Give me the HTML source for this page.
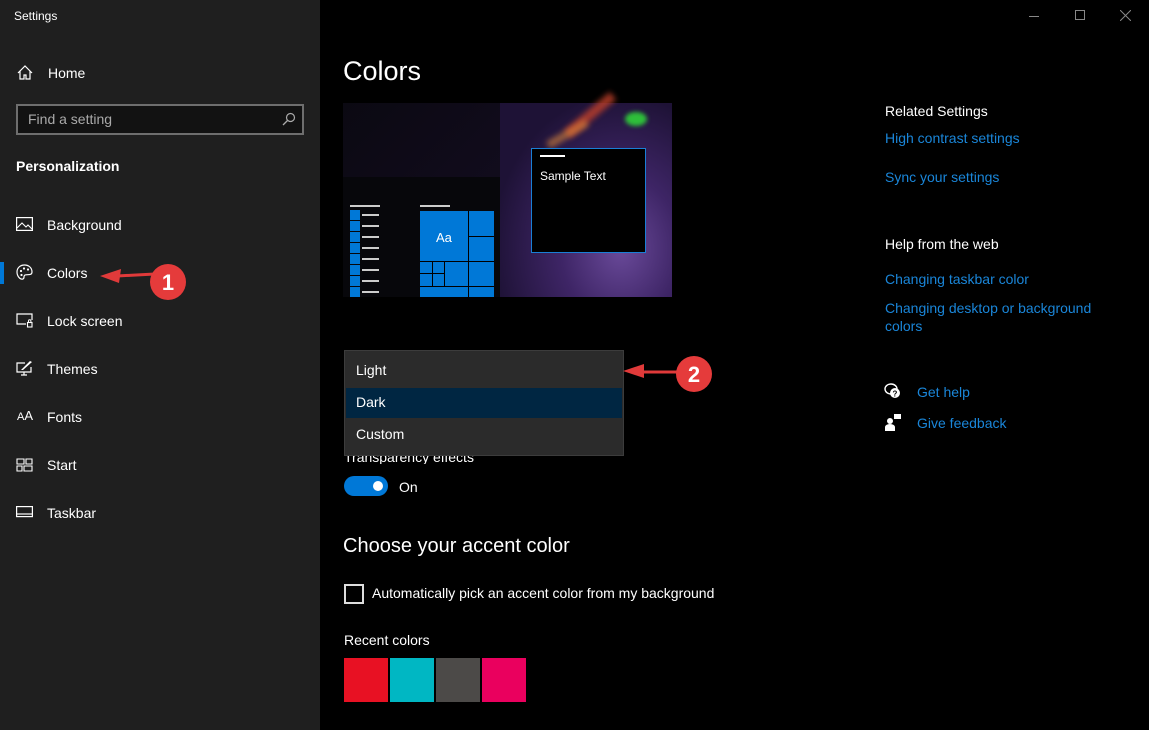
<!DOCTYPE html>
<html><head><meta charset="utf-8"><style>
*{margin:0;padding:0;box-sizing:border-box}
body{width:1149px;height:730px;background:#000;font-family:"Liberation Sans",sans-serif;color:#fff;position:relative;overflow:hidden}
.a{position:absolute}
.side{left:0;top:0;width:320px;height:730px;background:#1f1f1f}
.t{font-size:14px;white-space:nowrap}
.lnk{color:#1a86d9;font-size:14px;white-space:nowrap}
.ic{position:absolute;left:16px}
</style></head><body>
<div class="a side"></div>
<div class="a t" style="left:14px;top:9px;font-size:12px">Settings</div>
<svg class="a" style="left:17px;top:65px" width="16" height="15" viewBox="0 0 16 15"><path d="M1 8 L8 1 L15 8 M3 6 V14 H7 V10 H9 V14 H13 V6" fill="none" stroke="#fff" stroke-width="1.2"/></svg>
<div class="a t" style="left:48px;top:65px">Home</div>
<div class="a" style="left:16px;top:104px;width:288px;height:31px;border:2px solid #6e6e6e;background:#121212"></div>
<div class="a t" style="left:28px;top:111px;color:#aaa">Find a setting</div>
<svg class="a" style="left:282px;top:112px" width="14" height="14" viewBox="0 0 14 14"><circle cx="8.5" cy="5.5" r="4" fill="none" stroke="#aaa" stroke-width="1.2"/><path d="M5.5 8.5 L1 13" stroke="#aaa" stroke-width="1.3"/></svg>
<div class="a t" style="left:16px;top:158px;font-weight:bold">Personalization</div>

<svg class="ic" style="top:217px" width="17" height="14" viewBox="0 0 17 14"><rect x="0.6" y="0.6" width="15.8" height="12.8" fill="none" stroke="#fff" stroke-width="1.2"/><path d="M1 11 L6 6 L10 10 L12 8 L16 12" fill="none" stroke="#fff" stroke-width="1.1"/></svg>
<div class="a t" style="left:47px;top:217px">Background</div>
<div class="a" style="left:0;top:262px;width:4px;height:22px;background:#0078d7"></div>
<svg class="ic" style="top:264px" width="17" height="17" viewBox="0 0 17 17"><path d="M8.5 1 C4 1 1 4 1 8 C1 12 4 16 7 15 C9 14 7 12 9 11 C11 10 16 12 16 8 C16 4 13 1 8.5 1 Z" fill="none" stroke="#fff" stroke-width="1.2"/><circle cx="5" cy="7" r="1.1" fill="#fff"/><circle cx="8" cy="4.5" r="1.1" fill="#fff"/><circle cx="12" cy="5.5" r="1.1" fill="#fff"/><circle cx="5.5" cy="11" r="1.1" fill="#fff"/></svg>
<div class="a t" style="left:47px;top:265px">Colors</div>
<svg class="ic" style="top:313px" width="17" height="15" viewBox="0 0 17 15"><path d="M10 11 H1 V1 H16 V7" fill="none" stroke="#fff" stroke-width="1.2"/><rect x="11.5" y="9.5" width="4.5" height="4.5" fill="none" stroke="#fff" stroke-width="1.1"/><path d="M12.5 9.5 V8 a1.2 1.2 0 0 1 2.4 0 V9.5" fill="none" stroke="#fff"/></svg>
<div class="a t" style="left:47px;top:313px">Lock screen</div>
<svg class="ic" style="top:360px" width="17" height="17" viewBox="0 0 17 17"><path d="M9 3 H1 V12 H15 V7 M5 15 H11 M8 12 V15" fill="none" stroke="#fff" stroke-width="1.2"/><path d="M5 10 L14 1 L16 2 L7 10 Z" fill="#fff"/></svg>
<div class="a t" style="left:47px;top:361px">Themes</div>
<div class="a" style="left:17px;top:408px;font-size:11px">A<span style="font-size:13px">A</span></div>
<div class="a t" style="left:47px;top:409px">Fonts</div>
<svg class="ic" style="top:458px" width="17" height="14" viewBox="0 0 17 14"><path d="M1 1 H8 V6 H1 Z M10 1 H16 V6 H10 Z M1 8 H6 V13 H1 Z M8 8 H16 V13 H8 Z" fill="none" stroke="#fff" stroke-width="1.1"/></svg>
<div class="a t" style="left:47px;top:457px">Start</div>
<svg class="ic" style="top:506px" width="17" height="12" viewBox="0 0 17 12"><rect x="0.6" y="0.6" width="15.8" height="10" fill="none" stroke="#fff" stroke-width="1.2"/><path d="M1 8 H16" stroke="#fff" stroke-width="1.2"/></svg>
<div class="a t" style="left:47px;top:505px">Taskbar</div>

<svg class="a" style="left:95px;top:258px" width="100" height="44" viewBox="0 0 100 44"><path d="M60 16 L22 18" stroke="#e03a3a" stroke-width="3"/><path d="M5 18 L26 11 L24 25 Z" fill="#e03a3a"/><circle cx="73" cy="24" r="18" fill="#e53b3b"/><text x="73" y="32" font-family="Liberation Sans" font-weight="bold" font-size="22" fill="#fff" text-anchor="middle">1</text></svg>

<div class="a" style="left:1029px;top:16px;width:10px;height:1px;background:#888"></div>
<div class="a" style="left:1075px;top:10px;width:10px;height:10px;border:1px solid #888"></div>
<svg class="a" style="left:1120px;top:10px" width="11" height="11"><path d="M0 0 L11 11 M11 0 L0 11" stroke="#888"/></svg>

<div class="a" style="left:343px;top:56px;font-size:27px">Colors</div>

<div class="a" style="left:343px;top:103px;width:329px;height:194px;background:linear-gradient(135deg,#0b0912,#120c1e 50%,#1e1236)"></div>
<div class="a" style="left:500px;top:103px;width:172px;height:194px;background:radial-gradient(ellipse at 70% 75%,#6a4a9a 0%,#3e2566 35%,#1e1236 75%),#1e1236"></div>
<div class="a" style="left:560px;top:110px;width:60px;height:10px;background:#c0402a;transform:rotate(-40deg);filter:blur(3px);opacity:.8"></div>
<div class="a" style="left:545px;top:130px;width:45px;height:8px;background:#e08a3a;transform:rotate(-30deg);filter:blur(3px);opacity:.6"></div>
<div class="a" style="left:625px;top:112px;width:22px;height:14px;border-radius:50%;background:#2ebf3a;filter:blur(2px)"></div>
<div class="a" style="left:343px;top:177px;width:157px;height:120px;background:#07070b"></div>
<div class="a" style="left:350px;top:205px;width:30px;height:2px;background:#ccc"></div>
<div class="a" style="left:420px;top:205px;width:30px;height:2px;background:#ccc"></div>
<div class="a" style="left:350px;top:210px;width:10px;height:87px;background:repeating-linear-gradient(#0078d7 0 10px,transparent 10px 11px)"></div>
<div class="a" style="left:362px;top:214px;width:17px;height:80px;background:repeating-linear-gradient(#ccc 0 2px,transparent 2px 11px)"></div>
<div class="a" style="left:420px;top:211px;width:74px;height:86px;background:#0078d7"></div>
<div class="a" style="left:468px;top:211px;width:1px;height:86px;background:#000"></div>
<div class="a" style="left:468px;top:236px;width:26px;height:1px;background:#000"></div>
<div class="a" style="left:420px;top:261px;width:74px;height:1px;background:#000"></div>
<div class="a" style="left:420px;top:286px;width:74px;height:1px;background:#000"></div>
<div class="a" style="left:432px;top:261px;width:1px;height:25px;background:#000"></div>
<div class="a" style="left:444px;top:261px;width:1px;height:25px;background:#000"></div>
<div class="a" style="left:420px;top:273px;width:24px;height:1px;background:#000"></div>
<div class="a t" style="left:436px;top:230px;font-size:13px">Aa</div>
<div class="a" style="left:531px;top:148px;width:115px;height:105px;background:#000;border:1px solid #1a7fd6"></div>
<div class="a" style="left:540px;top:155px;width:25px;height:2px;background:#fff"></div>
<div class="a" style="left:540px;top:169px;font-size:12px">Sample Text</div>

<div class="a" style="left:344px;top:350px;width:280px;height:106px;background:#2b2b2b;border:1px solid #3c3c3c"></div>
<div class="a" style="left:346px;top:388px;width:276px;height:30px;background:#002642"></div>
<div class="a t" style="left:356px;top:362px">Light</div>
<div class="a t" style="left:356px;top:394px">Dark</div>
<div class="a t" style="left:356px;top:426px">Custom</div>
<div class="a" style="left:344px;top:456px;width:200px;height:8px;overflow:hidden"><div class="t" style="margin-top:-7px">Transparency effects</div></div>
<svg class="a" style="left:620px;top:352px" width="100" height="44" viewBox="0 0 100 44"><path d="M60 20 L20 20" stroke="#e03a3a" stroke-width="3"/><path d="M3 19 L24 12 L24 26 Z" fill="#e03a3a"/><circle cx="74" cy="22" r="18" fill="#e53b3b"/><text x="74" y="30" font-family="Liberation Sans" font-weight="bold" font-size="22" fill="#fff" text-anchor="middle">2</text></svg>

<div class="a" style="left:344px;top:476px;width:44px;height:20px;border-radius:10px;background:#0078d7"></div>
<div class="a" style="left:373px;top:481px;width:10px;height:10px;border-radius:50%;background:#fff"></div>
<div class="a t" style="left:399px;top:479px">On</div>

<div class="a" style="left:343px;top:535px;font-size:20px">Choose your accent color</div>
<div class="a" style="left:344px;top:584px;width:20px;height:20px;border:2px solid #ddd"></div>
<div class="a t" style="left:372px;top:585px">Automatically pick an accent color from my background</div>
<div class="a t" style="left:344px;top:632px">Recent colors</div>
<div class="a" style="left:344px;top:658px;width:44px;height:44px;background:#e81123"></div>
<div class="a" style="left:390px;top:658px;width:44px;height:44px;background:#00b7c3"></div>
<div class="a" style="left:436px;top:658px;width:44px;height:44px;background:#4c4a48"></div>
<div class="a" style="left:482px;top:658px;width:44px;height:44px;background:#ea005e"></div>

<div class="a t" style="left:885px;top:103px">Related Settings</div>
<div class="a lnk" style="left:885px;top:130px">High contrast settings</div>
<div class="a lnk" style="left:885px;top:169px">Sync your settings</div>
<div class="a t" style="left:885px;top:236px">Help from the web</div>
<div class="a lnk" style="left:885px;top:271px">Changing taskbar color</div>
<div class="a lnk" style="left:885px;top:299px;line-height:18px">Changing desktop or background<br>colors</div>
<svg class="a" style="left:884px;top:383px" width="18" height="17" viewBox="0 0 18 17"><ellipse cx="7" cy="6" rx="6" ry="5" fill="none" stroke="#fff" stroke-width="1.4"/><circle cx="11" cy="10" r="5" fill="#fff"/><text x="11" y="13.5" font-size="8" font-weight="bold" text-anchor="middle" fill="#000" font-family="Liberation Sans">?</text></svg>
<div class="a lnk" style="left:917px;top:384px">Get help</div>
<svg class="a" style="left:885px;top:414px" width="17" height="17" viewBox="0 0 17 17"><rect x="9" y="0" width="7" height="5" fill="#fff"/><circle cx="5" cy="7" r="3" fill="#fff"/><path d="M0 17 V13 a5 3 0 0 1 10 0 V17 Z" fill="#fff"/></svg>
<div class="a lnk" style="left:917px;top:415px">Give feedback</div>
</body></html>
